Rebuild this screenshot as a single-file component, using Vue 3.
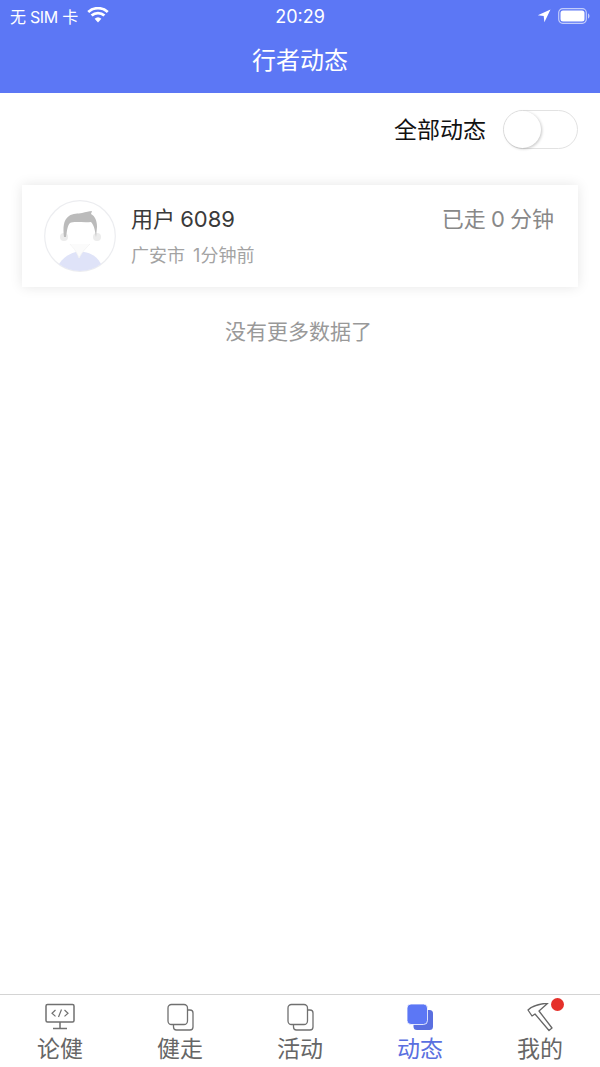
<script setup>
const tabs = [
  { label: '论健', icon: 'monitor' },
  { label: '健走', icon: 'copy' },
  { label: '活动', icon: 'copy' },
  { label: '动态', icon: 'solid', active: true },
  { label: '我的', icon: 'hammer', badge: true }
]
</script>

<template>
  <div class="page">
    <header class="head">
      <div class="status">
        <div class="st-left">
          <span class="carrier">无 SIM 卡</span>
          <svg class="wifi" width="22" height="16" viewBox="0 0 22 16">
            <path d="M11 15.500 7.600 11.800a5 5 0 0 1 6.800 0Z" fill="#fff" />
            <path d="M5.600 9.600 3.600 7.500a11 11 0 0 1 14.800 0l-2 2.100a8 8 0 0 0-10.800 0Z" fill="#fff" />
            <path d="M2.200 6 .3 4a15.800 15.800 0 0 1 21.400 0l-1.900 2a13 13 0 0 0-17.600 0Z" fill="#fff" />
          </svg>
        </div>
        <span class="clock">20:29</span>
        <div class="st-right">
          <svg width="14" height="14" viewBox="0 0 14 14"><path d="M13.500.5 .8 6.300l5.900.6.700 6.300Z" fill="#fff" /></svg>
          <svg width="32" height="16" viewBox="0 0 32 16">
            <rect x=".7" y=".7" width="27.600" height="14.600" rx="4" fill="none" stroke="#c3cdfb" stroke-width="1.200" />
            <rect x="2.500" y="2.500" width="24" height="11" rx="2.500" fill="#fff" />
            <path d="M30 5.500c1 .3 1.500 1.300 1.500 2.500s-.5 2.200-1.500 2.500Z" fill="#c3cdfb" />
          </svg>
        </div>
      </div>
      <h1 class="title">行者动态</h1>
    </header>

    <main class="body">
      <div class="filter">
        <span class="filter-label">全部动态</span>
        <div class="switch"><div class="knob"></div></div>
      </div>

      <section class="card">
        <div class="avatar">
          <svg width="72" height="72" viewBox="0 0 72 72">
            <circle cx="36" cy="36" r="35.300" fill="#fff" stroke="#ecedf0" stroke-width="1.200" />
            <path d="M15 64C20 56 28 53 32 52L40 52C46 53 53 56 57 64A35 35 0 0 1 15 64Z" fill="#dfe3f8" />
            <circle cx="20" cy="37" r="4" fill="#ececec" />
            <circle cx="53" cy="37" r="4" fill="#ececec" />
            <path d="M26 44C29 48 32 50 35 58C38 52 42 48 46 44" fill="#fbfbfb" stroke="#f3f3f3" stroke-width=".8" />
            <path d="M20 37C19 28 19 20 25 16C29 13 34 14 38 13C42 12 45 11 48 11L47 14C51 16 53 21 53 27L52 37C51 30 50 25 47 22C40 23 30 21 26 23C23 26 23 32 22 37Z" fill="#bbb" />
          </svg>
        </div>
        <div class="info">
          <div class="row-top">
            <span class="name">用户 6089</span>
            <span class="walked">已走 0 分钟</span>
          </div>
          <div class="meta">广安市 1分钟前</div>
        </div>
      </section>

      <p class="nomore">没有更多数据了</p>
    </main>

    <nav class="tabbar">
      <div v-for="t in tabs" :key="t.label" class="tab" :class="{ on: t.active }">
        <div class="ico">
          <svg v-if="t.icon === 'monitor'" width="32" height="28" viewBox="0 0 32 28" fill="none" stroke="#707070" stroke-width="1.500">
            <rect x="2" y="1.500" width="28" height="17.500" rx="1.500" />
            <path d="M16 19v6.500M9 25.500h14" />
            <path d="M11.500 7 8 10.200l3.500 3.200M20.500 7 24 10.200l-3.500 3.200M17.500 6.500l-3 7.500" stroke-width="1.200" />
          </svg>
          <svg v-else-if="t.icon === 'copy'" width="32" height="28" viewBox="0 0 32 28" fill="none" stroke="#707070" stroke-width="1.300">
            <path d="M23.500 7h2.500a3 3 0 0 1 3 3v14a3 3 0 0 1-3 3H12.500a3 3 0 0 1-3-3v-2.500" />
            <rect x="4" y="1.500" width="19.500" height="20" rx="3.500" />
          </svg>
          <svg v-else-if="t.icon === 'solid'" width="32" height="28" viewBox="0 0 32 28">
            <rect x="9.500" y="7" width="19.500" height="20" rx="3.500" fill="#5a6fe0" />
            <rect x="3" y="1" width="20.500" height="20.500" rx="4" fill="#5c77f5" stroke="#fff" stroke-width=".8" />
          </svg>
          <svg v-else width="32" height="30" viewBox="0 0 32 30" fill="none" stroke="#666" stroke-width="1.300" stroke-linejoin="round">
            <path d="M4 7C8 3 14 1 24 0L15 8 28 25 25 27.500 11 11 8 13Z" />
          </svg>
          <span v-if="t.badge" class="dot"></span>
        </div>
        <span class="tab-label">{{ t.label }}</span>
      </div>
    </nav>
  </div>
</template>

<style scoped>
.page {
  width: 600px;
  height: 1067px;
  display: flex;
  flex-direction: column;
  background: #fff;
  font-family: "Inter", "Noto Sans CJK SC", sans-serif;
  overflow: hidden;
}
.head {
  height: 93px;
  background: #5c77f5;
  color: #fff;
  flex: none;
}
.status {
  height: 32px;
  padding: 0 10px;
  display: grid;
  grid-template-columns: 1fr auto 1fr;
  align-items: center;
}
.st-left { display: flex; align-items: center; gap: 9px; }
.carrier { font-size: 16px; letter-spacing: -0.3px; }
.wifi { margin-top: -3px; }
.clock { font-size: 18px; }
.st-right { display: flex; justify-content: flex-end; align-items: center; gap: 7px; }
.title {
  margin: 0;
  padding-top: 13px;
  font-size: 24px;
  line-height: 32px;
  font-weight: 400;
  text-align: center;
}
.body { flex: 1; min-height: 0; }
.filter {
  height: 72px;
  padding: 0 22px 0 0;
  display: flex;
  justify-content: flex-end;
  align-items: center;
  gap: 17px;
}
.filter-label { font-size: 23px; color: #111; margin-top: -2px; }
.switch {
  width: 75px;
  height: 39px;
  box-sizing: border-box;
  border: 1px solid #e2e2e2;
  border-radius: 20px;
  background: #fff;
}
.knob {
  width: 37px;
  height: 37px;
  border-radius: 50%;
  background: #fff;
  box-shadow: 1px 1px 3px rgba(0, 0, 0, 0.22);
}
.card {
  margin: 20px 22px 0;
  height: 102px;
  padding: 15px 24px 0 22px;
  box-sizing: border-box;
  display: flex;
  gap: 15px;
  background: #fff;
  box-shadow: 0 0 12px rgba(0, 0, 0, 0.1);
}
.avatar { width: 72px; height: 72px; flex: none; }
.info { flex: 1; }
.row-top {
  display: flex;
  justify-content: space-between;
  align-items: center;
  height: 36px;
  margin-top: -1px;
}
.name { font-size: 22px; color: #3a3a3a; word-spacing: -1px; }
.walked { font-size: 22px; color: #888; word-spacing: -1px; }
.meta { margin-top: 8px; font-size: 18px; line-height: 26px; color: #a3a3a3; word-spacing: 3px; }
.nomore {
  margin: 30px 0 0;
  padding-right: 3px;
  text-align: center;
  font-size: 21px;
  line-height: 30px;
  color: #999;
}
.tabbar {
  height: 73px;
  flex: none;
  box-sizing: border-box;
  border-top: 1px solid #d4d4d4;
  display: grid;
  grid-template-columns: repeat(5, 1fr);
}
.tab {
  display: flex;
  flex-direction: column;
  align-items: center;
  padding-top: 8px;
  color: #666;
}
.tab.on { color: #5a6fe0; }
.ico { position: relative; width: 32px; height: 28px; }
.tab-label { margin-top: 3px; font-size: 23px; line-height: 30px; }
.dot {
  position: absolute;
  right: -8px;
  top: -5px;
  width: 13px;
  height: 13px;
  border-radius: 50%;
  background: #e5302a;
}
</style>

<style>
html, body { margin: 0; background: #fff; }
</style>
